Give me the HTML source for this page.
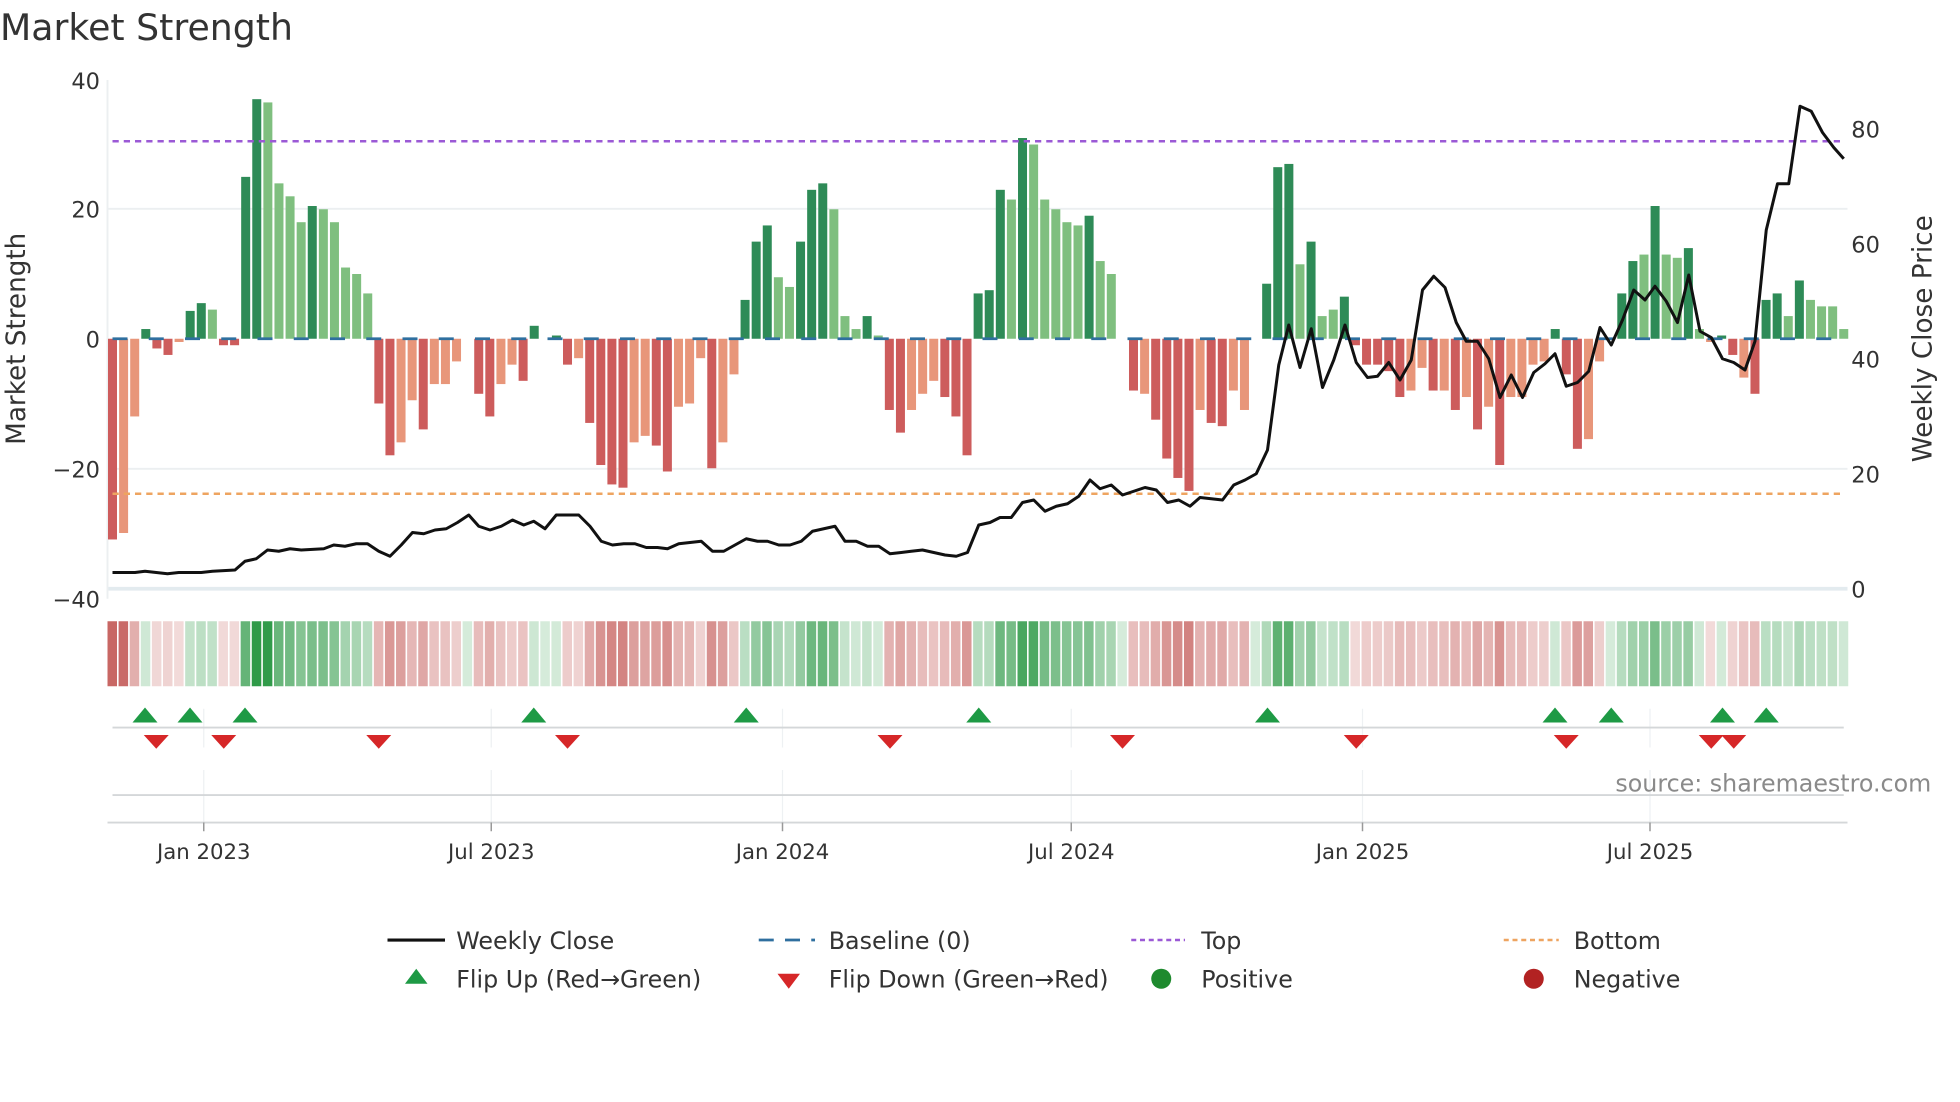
<!DOCTYPE html>
<html><head><meta charset="utf-8"><style>
html,body{margin:0;padding:0;background:#fff;width:1960px;height:1102px;overflow:hidden}
svg{display:block;font-family:"DejaVu Sans","Liberation Sans",sans-serif}
</style></head><body>
<svg id="s" width="1960" height="1102" viewBox="0 0 1568 881.6" xmlns="http://www.w3.org/2000/svg">
<rect width="1568" height="882" fill="#fff"/>
<text x="0" y="32" font-size="29" fill="#333">Market Strength</text>
<line x1="86" y1="167" x2="1478" y2="167" stroke="#eceff1" stroke-width="1.5"/>
<line x1="86" y1="375" x2="1478" y2="375" stroke="#eceff1" stroke-width="1.5"/>
<line x1="86" y1="471" x2="1478" y2="471" stroke="#e3ebef" stroke-width="3"/>
<line x1="86" y1="64" x2="86" y2="479" stroke="#eceff1" stroke-width="1.5"/>
<g font-size="18" fill="#333" text-anchor="end">
<text x="80" y="71">40</text><text x="80" y="174">20</text><text x="80" y="278">0</text><text x="80" y="382">−20</text><text x="80" y="486">−40</text>
</g>
<g font-size="18" fill="#333">
<text x="1481" y="110">80</text><text x="1481" y="202">60</text><text x="1481" y="294">40</text><text x="1481" y="386">20</text><text x="1481" y="478">0</text>
</g>
<text transform="translate(20,271) rotate(-90)" font-size="21" fill="#333" text-anchor="middle">Market Strength</text>
<text transform="translate(1545,271) rotate(-90)" font-size="21" fill="#333" text-anchor="middle">Weekly Close Price</text>
<g id="bars"></g>
<line x1="90" y1="271" x2="1478" y2="271" stroke="#2f6f9f" stroke-width="2.2" stroke-dasharray="12,17"/>
<line x1="90" y1="113" x2="1476" y2="113" stroke="#9b59d6" stroke-width="2" stroke-dasharray="5,4"/>
<line x1="90" y1="395" x2="1476" y2="395" stroke="#eea460" stroke-width="2" stroke-dasharray="5,4"/>
<polyline id="price" fill="none" stroke="#111" stroke-width="2.4" stroke-linejoin="round"/>
<g id="heat"></g>
<g stroke="#eef1f3" stroke-width="1">
<line x1="163" y1="567" x2="163" y2="598"/><line x1="393" y1="567" x2="393" y2="598"/><line x1="626" y1="567" x2="626" y2="598"/><line x1="857" y1="567" x2="857" y2="598"/><line x1="1090" y1="567" x2="1090" y2="598"/><line x1="1320" y1="567" x2="1320" y2="598"/>
<line x1="163" y1="616" x2="163" y2="658"/><line x1="393" y1="616" x2="393" y2="658"/><line x1="626" y1="616" x2="626" y2="658"/><line x1="857" y1="616" x2="857" y2="658"/><line x1="1090" y1="616" x2="1090" y2="658"/><line x1="1320" y1="616" x2="1320" y2="658"/>
</g>
<line x1="90" y1="582" x2="1475" y2="582" stroke="#d4d7d9" stroke-width="1.5"/>
<line x1="90" y1="636" x2="1475" y2="636" stroke="#d4d7d9" stroke-width="1.5"/>
<line x1="86" y1="658" x2="1478" y2="658" stroke="#d4d7d9" stroke-width="1.5"/>
<g id="marks"></g>
<text x="1545" y="633" font-size="19" fill="#8a8a8a" text-anchor="end">source: sharemaestro.com</text>
<g stroke="#999" stroke-width="1.2">
<line x1="163" y1="658" x2="163" y2="665"/><line x1="393" y1="658" x2="393" y2="665"/><line x1="626" y1="658" x2="626" y2="665"/><line x1="857" y1="658" x2="857" y2="665"/><line x1="1090" y1="658" x2="1090" y2="665"/><line x1="1320" y1="658" x2="1320" y2="665"/>
</g>
<g font-size="17" fill="#333" text-anchor="middle">
<text x="163" y="687">Jan 2023</text><text x="393" y="687">Jul 2023</text><text x="626" y="687">Jan 2024</text><text x="857" y="687">Jul 2024</text><text x="1090" y="687">Jan 2025</text><text x="1320" y="687">Jul 2025</text>
</g>
<g font-size="19" fill="#333">
<line x1="310" y1="752" x2="356" y2="752" stroke="#111" stroke-width="2.5"/>
<text x="365" y="759">Weekly Close</text>
<line x1="607" y1="752" x2="652" y2="752" stroke="#2f6f9f" stroke-width="2.2" stroke-dasharray="12,9"/>
<text x="663" y="759">Baseline (0)</text>
<line x1="905" y1="752" x2="948" y2="752" stroke="#9b59d6" stroke-width="2" stroke-dasharray="4,3"/>
<text x="961" y="759">Top</text>
<line x1="1203" y1="752" x2="1247" y2="752" stroke="#eea460" stroke-width="2" stroke-dasharray="4,3"/>
<text x="1259" y="759">Bottom</text>
<polygon points="333,775 342,787 324,787" fill="#1e9a45"/>
<text x="365" y="790">Flip Up (Red→Green)</text>
<polygon points="622,779 640,779 631,791" fill="#d62728"/>
<text x="663" y="790">Flip Down (Green→Red)</text>
<circle cx="929" cy="783" r="8" fill="#1e8a2e"/>
<text x="961" y="790">Positive</text>
<circle cx="1227" cy="783" r="8" fill="#b22222"/>
<text x="1259" y="790">Negative</text>
</g>
</svg>
<script>
var V=[[-31,1],[-30,0],[-12,0],[1.5,1],[-1.5,1],[-2.5,1],[-0.5,0],[4.3,1],[5.5,1],[4.5,0],[-1,1],[-1,1],[25,1],[37,1],[36.5,0],[24,0],[22,0],[18,0],[20.5,1],[20,0],[18,0],[11,0],[10,0],[7,0],[-10,1],[-18,1],[-16,0],[-9.5,0],[-14,1],[-7,0],[-7,0],[-3.5,0],[0,0],[-8.5,1],[-12,1],[-7,0],[-4,0],[-6.5,1],[2,1],[0,0],[0.5,1],[-4,1],[-3,0],[-13,1],[-19.5,1],[-22.5,1],[-23,1],[-16,0],[-15,0],[-16.5,1],[-20.5,1],[-10.5,0],[-10,0],[-3,0],[-20,1],[-16,0],[-5.5,0],[6,1],[15,1],[17.5,1],[9.5,0],[8,0],[15,1],[23,1],[24,1],[20,0],[3.5,0],[1.5,0],[3.5,1],[0.5,0],[-11,1],[-14.5,1],[-11,0],[-8.5,0],[-6.5,0],[-9,1],[-12,1],[-18,1],[7,1],[7.5,1],[23,1],[21.5,0],[31,1],[30,0],[21.5,0],[20,0],[18,0],[17.5,0],[19,1],[12,0],[10,0],[0,0],[-8,1],[-8.5,0],[-12.5,1],[-18.5,1],[-21.5,1],[-23.5,1],[-11,0],[-13,1],[-13.5,1],[-8,0],[-11,0],[0,0],[8.5,1],[26.5,1],[27,1],[11.5,0],[15,1],[3.5,0],[4.5,0],[6.5,1],[-1,1],[-4,1],[-4,1],[-5,1],[-9,1],[-8,0],[-4.5,0],[-8,1],[-8,0],[-11,1],[-9,0],[-14,1],[-10.5,0],[-19.5,1],[-9,0],[-9,0],[-4,0],[-3.5,0],[1.5,1],[-5.5,1],[-17,1],[-15.5,0],[-3.5,0],[0,0],[7,1],[12,1],[13,0],[20.5,1],[13,0],[12.5,0],[14,1],[1.5,0],[-0.5,0],[0.5,1],[-2.5,1],[-6,0],[-8.5,1],[6,1],[7,1],[3.5,0],[9,1],[6,0],[5,0],[5,0],[1.5,0]];
var N=V.length,x0=90,dx=(1475-90)/(N-1),ns="http://www.w3.org/2000/svg";
function el(t,a,p){var e=document.createElementNS(ns,t);for(var k in a)e.setAttribute(k,a[k]);p.appendChild(e);return e;}
var B=document.getElementById('bars'),H=document.getElementById('heat'),M=document.getElementById('marks');
V.forEach(function(d,i){var v=d[0],x=x0+i*dx,h=Math.abs(v)*5.18;
 var c=v>=0?(d[1]?'#2e8b57':'#7fbf7f'):(d[1]?'#cd5c5c':'#e8967a');
 if(h>0.3)el('rect',{x:x-3.6,y:v>=0?271-h:271,width:7.2,height:h,fill:c},B);
 var a=Math.min(1,0.2+0.8*Math.abs(v)/37);
 el('rect',{x:x-4,y:497,width:7.6,height:52,fill:v>=0?'#2f9a48':'#c0504d','fill-opacity':a.toFixed(2)},H);
});
var P=[[90,458],[108,458],[116,457],[125,458],[134,459],[143,458],[161,458],[170,457],[188,456],[196,449],[205,447],[214,440],[223,441],[232,439],[241,440],[259,439],[267,436],[276,437],[285,435],[294,435],[303,441],[312,445],[321,436],[330,426],[339,427],[348,424],[357,423],[366,418],[375,412],[383,421],[392,424],[401,421],[410,416],[419,420],[427,417],[436,423],[445,412],[454,412],[463,412],[472,421],[481,433],[490,436],[499,435],[508,435],[517,438],[526,438],[534,439],[543,435],[552,434],[561,433],[570,441],[579,441],[588,436],[597,431],[606,433],[614,433],[623,436],[632,436],[641,433],[650,425],[659,423],[668,421],[676,433],[685,433],[694,437],[703,437],[712,443],[721,442],[729,441],[738,440],[747,442],[756,444],[765,445],[774,442],[783,420],[792,418],[800,414],[809,414],[818,402],[827,400],[836,409],[845,405],[854,403],[863,397],[872,384],[880,391],[889,388],[898,396],[907,393],[916,390],[925,392],[934,402],[943,400],[952,405],[960,398],[969,399],[978,400],[987,388],[996,384],[1005,379],[1014,360],[1023,292],[1031,260],[1040,294],[1049,263],[1058,310],[1067,288],[1076,260],[1085,290],[1094,302],[1102,301],[1111,290],[1120,304],[1129,288],[1138,232],[1147,221],[1156,230],[1165,258],[1173,273],[1182,273],[1191,287],[1200,318],[1209,300],[1218,318],[1227,298],[1236,291],[1244,283],[1253,309],[1262,306],[1271,297],[1280,262],[1289,276],[1298,256],[1307,232],[1316,240],[1324,229],[1333,241],[1342,258],[1351,220],[1360,265],[1369,270],[1378,287],[1387,290],[1396,296],[1404,273],[1413,184],[1422,147],[1431,147],[1440,85],[1449,89],[1458,106],[1467,118],[1475,127]];
document.getElementById('price').setAttribute('points',P.map(function(p){return p.join(',')}).join(' '));
[116,152,196,427,597,783,1014,1244,1289,1378,1413].forEach(function(x){el('polygon',{points:(x)+',566 '+(x+10)+',578 '+(x-10)+',578',fill:'#1e9a45'},M);});
[125,179,303,454,712,898,1085,1253,1369,1387].forEach(function(x){el('polygon',{points:(x-10)+',588 '+(x+10)+',588 '+x+',599',fill:'#d62728'},M);});
</script>
</body></html>
